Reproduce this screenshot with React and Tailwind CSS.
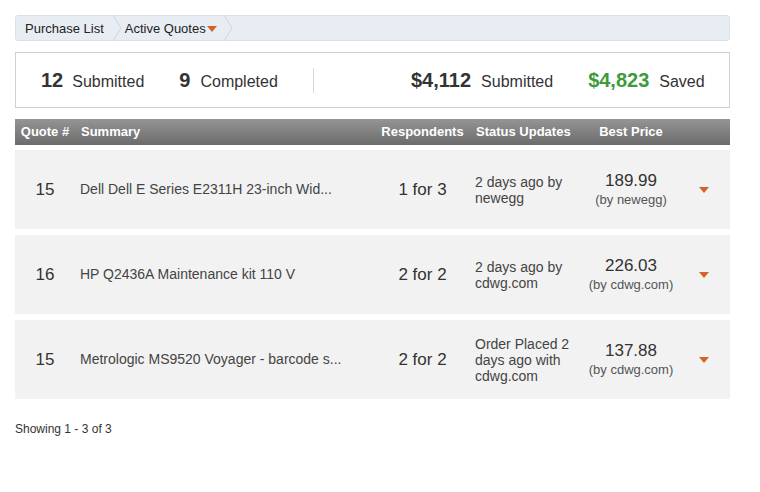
import React from "react";

const rows = [
  {
    id: 15,
    summary: "Dell Dell E Series E2311H 23-inch Wid...",
    respondents: "1 for 3",
    status: ["2 days ago by", "newegg"],
    price: "189.99",
    vendor: "(by newegg)",
  },
  {
    id: 16,
    summary: "HP Q2436A Maintenance kit 110 V",
    respondents: "2 for 2",
    status: ["2 days ago by", "cdwg.com"],
    price: "226.03",
    vendor: "(by cdwg.com)",
  },
  {
    id: 15,
    summary: "Metrologic MS9520 Voyager - barcode s...",
    respondents: "2 for 2",
    status: ["Order Placed 2", "days ago with", "cdwg.com"],
    price: "137.88",
    vendor: "(by cdwg.com)",
  },
];

const Caret = ({ className = "" }) => (
  <svg width="10" height="6" viewBox="0 0 10 6" className={className}>
    <path d="M0 0 L10 0 L5 6 Z" fill="#d4622a" />
  </svg>
);

const Chevron = () => (
  <svg width="10" height="26" viewBox="0 0 10 26" className="shrink-0">
    <path d="M1 0 L9 13 L1 26" fill="none" stroke="#cdd4dd" strokeWidth="1" />
  </svg>
);

const App = () => {
  return (
    <div
      className="w-[760px] h-[492px] bg-white pl-[15px] pt-[15px] text-[#333]"
      style={{ fontFamily: '"Liberation Sans", Arial, sans-serif' }}
    >
      <div className="w-[715px]">
        {/* Breadcrumb */}
        <div className="h-[26px] bg-[#e8edf3] border border-[#dbe1e8] rounded-[3px] flex items-center pl-[9px] text-[13px] text-[#222]">
          <span className="pr-[8px] pt-[1px]">Purchase List</span>
          <Chevron />
          <span className="pl-[3px] pt-[1px] flex items-center">
            Active Quotes
            <Caret className="ml-[1px] mt-[1px]" />
          </span>
          <span className="ml-[6px] flex"><Chevron /></span>
        </div>

        {/* Stats */}
        <div className="mt-[11px] h-[56px] border border-[#d0d0d0] flex items-center text-[16px] text-[#333]">
          <div className="flex items-baseline pl-[25px] w-[297px]">
            <span className="font-bold text-[20px] text-[#333]">12</span>
            <span className="ml-[9px]">Submitted</span>
            <span className="font-bold text-[20px] ml-[35px]">9</span>
            <span className="ml-[10px]">Completed</span>
          </div>
          <div className="w-px h-[25px] bg-[#d6d6d6]" />
          <div className="flex items-baseline ml-[97px]">
            <span className="font-bold text-[20px]">$4,112</span>
            <span className="ml-[10px]">Submitted</span>
            <span className="font-bold text-[20px] text-[#3d9a3d] ml-[35px]">$4,823</span>
            <span className="ml-[10px]">Saved</span>
          </div>
        </div>

        {/* Table header */}
        <div className="mt-[11px] h-[26px] bg-gradient-to-b from-[#959595] to-[#6b6b6b] flex items-center text-white font-bold text-[13px]">
          <div className="w-[60px] text-center">Quote #</div>
          <div className="w-[300px] pl-[6px]">Summary</div>
          <div className="w-[95px] text-center">Respondents</div>
          <div className="w-[116px] pl-[6px]">Status Updates</div>
          <div className="w-[90px] text-center">Best Price</div>
        </div>

        {/* Rows */}
        <div className="mt-[5px] flex flex-col gap-[6px]">
          {rows.map((r, i) => (
            <div key={i} className="h-[79px] bg-[#f2f2f2] flex items-center">
              <div className="w-[60px] text-center text-[17px] text-[#333]">{r.id}</div>
              <div className="w-[300px] pl-[5px] text-[14px] text-[#444] whitespace-nowrap">{r.summary}</div>
              <div className="w-[95px] text-center text-[17px] text-[#333]">{r.respondents}</div>
              <div className="w-[116px] pl-[5px] text-[14px] leading-[16px] text-[#444]">
                {r.status.map((s, j) => (
                  <div key={j}>{s}</div>
                ))}
              </div>
              <div className="w-[90px] text-center whitespace-nowrap">
                <div className="text-[17px] leading-[20px] text-[#333]">{r.price}</div>
                <div className="text-[13px] leading-[17px] text-[#555]">{r.vendor}</div>
              </div>
              <div className="flex-1 flex justify-center">
                <Caret className="ml-[2px]" />
              </div>
            </div>
          ))}
        </div>

        <div className="mt-[21px] text-[12px] text-[#333]">Showing 1 - 3 of 3</div>
      </div>
    </div>
  );
};

export default App;
